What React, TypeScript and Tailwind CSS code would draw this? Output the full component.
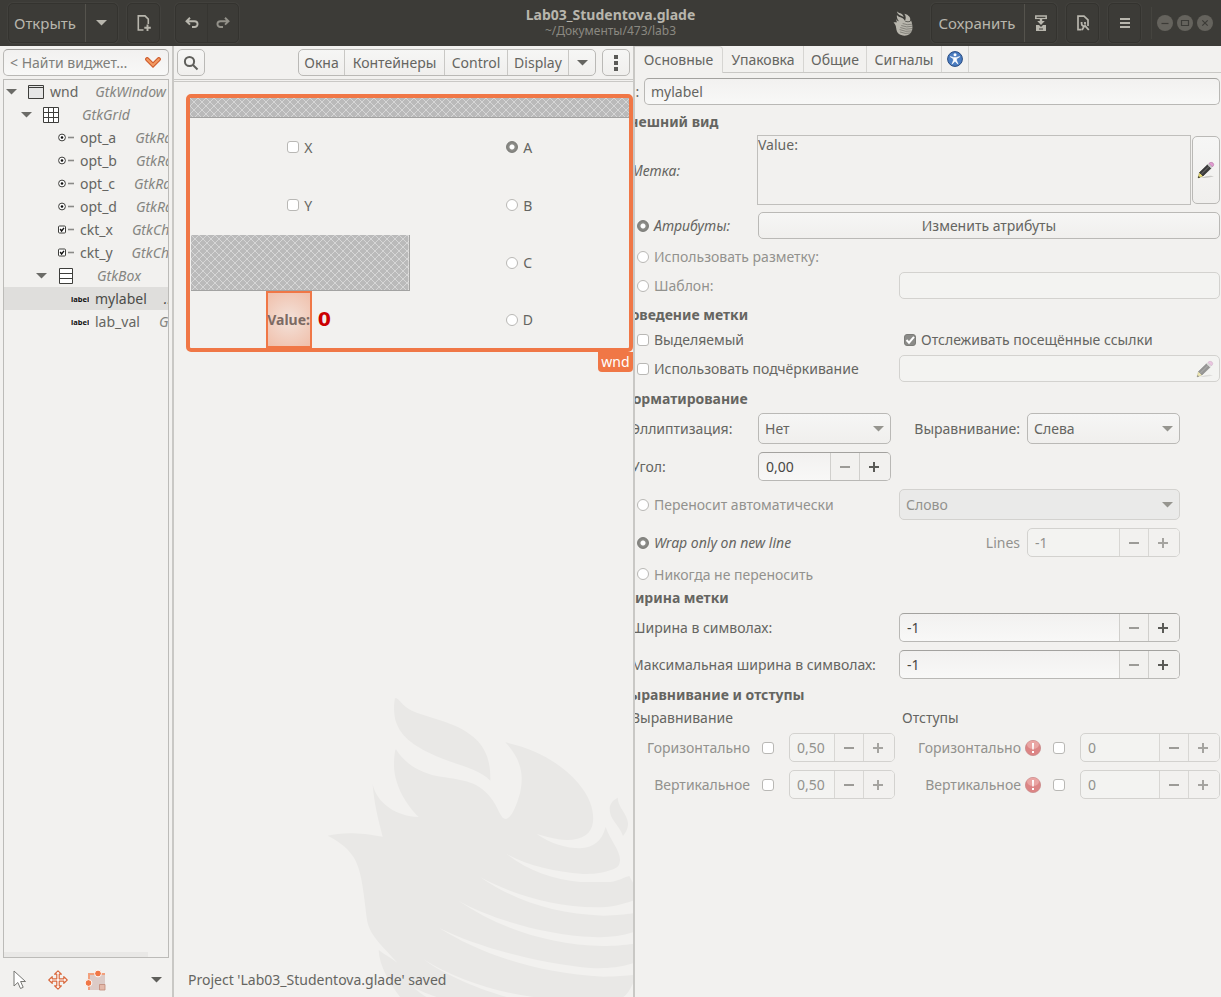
import { useId, type ReactNode } from "react";

const FIELD = "border border-[#b9b8b5] border-t-[#a3a29f] bg-linear-to-b from-[#f2f1f0] to-[#f8f8f7] rounded-[5px]";
const FIELD_OFF = "border border-[#d3d2cf] bg-[#f3f3f1] rounded-[5px]";
const BUTTON = "border border-[#bab9b6] bg-linear-to-b from-[#f6f6f5] to-[#f0efed] rounded-[5px]";

function Triangle({ className = "" }: { className?: string }) {
  return (
    <svg viewBox="0 0 11 6" className={`h-[6px] w-[11px] ${className}`} fill="currentColor" aria-hidden="true">
      <path d="M0 0H11L5.5 5.6Z" />
    </svg>
  );
}

/* ---------- header bar ---------- */

const HEAD_GROUP = "flex h-10 rounded-[5px] border border-[#34332f] bg-[#3c3b37] shadow-[0_0_0_1px_#42413d]";
const HEAD_BTN = "flex h-full w-[31px] items-center justify-center text-[#b8b6ad]";

function BirdIcon() {
  return (
    <svg viewBox="0 0 58 74" className="h-[25px] w-[20px]" aria-hidden="true">
      <g fill="#b8b6ad">
        <path d="M11 1C15 8 28 5 31 18C24 13 12 12 11 1Z" />
        <path d="M33 8C46 11 53 20 50 29C46 33 40 31 35 29C38 22 38 14 33 8Z" />
        <path d="M11 12C16 20 28 17 33 27L36 31C42 34 50 34 53 28C57 38 58 48 56 57C53 67 45 73 34 73C19 73 10 65 9 52C8 43 6 39 1 34C5 33 9 33 11 34L8 23C10 28 13 30 17 30C12 25 10 19 11 12Z" />
      </g>
      <g fill="none" stroke="#3c3b37" strokeWidth="1.3">
        <path d="M28 37Q42 43 56 39M24 43Q40 50 57 45M21 49Q38 57 57 52M19 55Q36 63 56 59M20 62Q35 69 52 65" />
      </g>
    </svg>
  );
}

function WindowDot({ label, children }: { label: string; children: ReactNode }) {
  return (
    <button aria-label={label} className="size-4 rounded-full bg-[#65635d] text-[#3c3b37]">
      <svg viewBox="0 0 16 16" className="size-4" fill="none" stroke="currentColor" strokeWidth="1.2">
        {children}
      </svg>
    </button>
  );
}

function HeaderBar() {
  return (
    <header className="grid h-[46px] shrink-0 grid-cols-[1fr_auto_1fr] items-center bg-[#3c3b37] pr-2 pl-2 text-[#b8b6ad]">
      <div className="flex items-center">
        <div className={HEAD_GROUP}>
          <button className="w-[77px] border-r border-[#55534d] pr-1 text-[15px]">Открыть</button>
          <button className={HEAD_BTN} aria-label="Недавние файлы"><Triangle /></button>
        </div>
        <div className={`${HEAD_GROUP} ml-[9px]`}>
          <button className={HEAD_BTN} aria-label="Новый проект">
            <svg viewBox="0 0 16 16" className="size-4" fill="none" stroke="currentColor" strokeWidth="1.6">
              <path d="M7.5 15H2.3V.9H9L12.3 4.2V9" />
              <path d="M11.5 9.5V16M8.3 12.7H14.8" strokeWidth="1.9" />
            </svg>
          </button>
        </div>
        <div className={`${HEAD_GROUP} ml-[15px]`}>
          <button className={HEAD_BTN} aria-label="Отменить">
            <svg viewBox="0 0 14 12" className="h-3 w-[14px]" fill="none" stroke="currentColor" strokeWidth="1.9">
              <path d="M5 .8L1.5 4.2L5 7.6M2 4.2H9.5C13.6 4.2 13.6 10 9.5 10H7" />
            </svg>
          </button>
          <button className={`${HEAD_BTN} border-l border-[#34332f] opacity-70`} aria-label="Повторить">
            <svg viewBox="0 0 14 12" className="h-3 w-[14px]" fill="none" stroke="currentColor" strokeWidth="1.9">
              <path d="M9 .8L12.5 4.2L9 7.6M12 4.2H4.5C.4 4.2 .4 10 4.5 10H7" />
            </svg>
          </button>
        </div>
      </div>
      <div className="text-center">
        <h1 className="text-[14px] leading-4 font-bold">Lab03_Studentova.glade</h1>
        <p className="text-[12px] leading-4 text-[#8b8981]">~/Документы/473/lab3</p>
      </div>
      <div className="flex items-center justify-end">
        <BirdIcon />
        <div className={`${HEAD_GROUP} ml-[18px]`}>
          <button className="w-[93px] border-r border-[#55534d] pr-[2px] text-[15px]">Сохранить</button>
          <button className={HEAD_BTN} aria-label="Сохранить как">
            <svg viewBox="0 0 14 16" className="h-4 w-[14px]" aria-hidden="true">
              <path d="M1.8 3.2V1H12.2V3.2" fill="none" stroke="currentColor" strokeWidth="1.5" />
              <path d="M1 3.5H13" stroke="currentColor" strokeWidth="1.2" />
              <path d="M5.8 4H8.2V6H10.8L7 10L3.2 6H5.8Z" fill="currentColor" />
              <path d="M2 10H5L7 12L9 10H12V16H2ZM5 13.5V14.5H9V13.5Z" fill="currentColor" fillRule="evenodd" />
            </svg>
          </button>
        </div>
        <div className={`${HEAD_GROUP} ml-[9px]`}>
          <button className={HEAD_BTN} aria-label="Просмотр">
            <svg viewBox="0 0 14 16" className="h-4 w-[14px]" fill="none" stroke="currentColor" strokeWidth="1.7">
              <path d="M5.5 14.6H2V1.2H8L12 4.8V11" />
              <path d="M5.6 7V8.6C5.6 11 7.8 11.6 9.2 10.8L12.8 15M9 7V9.4M6 15L8.6 10.6" strokeWidth="1.8" />
            </svg>
          </button>
        </div>
        <div className={`${HEAD_GROUP} ml-[9px]`}>
          <button className={HEAD_BTN} aria-label="Меню">
            <svg viewBox="0 0 10 10" className="size-[10px]" fill="currentColor"><path d="M0 0H10V2H0ZM0 4H10V6H0ZM0 8H10V10H0Z" /></svg>
          </button>
        </div>
        <div className="ml-[10px] flex h-8 items-center gap-1 border-l border-[#45443f] pl-[5px]">
          <WindowDot label="Свернуть"><path d="M4.5 8.5H11.5" /></WindowDot>
          <WindowDot label="Развернуть"><path d="M4.5 5.5H11.5V10.5H4.5Z" /></WindowDot>
          <WindowDot label="Закрыть"><path d="M5.3 5.3L10.7 10.7M10.7 5.3L5.3 10.7" /></WindowDot>
        </div>
      </div>
    </header>
  );
}

/* ---------- widget tree ---------- */

type Kind = "window" | "grid" | "radio" | "check" | "box" | "label";

function KindIcon({ kind }: { kind: Kind }) {
  if (kind === "label") {
    return (
      <svg viewBox="0 0 18 8" className="h-2 w-[18px] shrink-0" aria-hidden="true">
        <text x="0" y="7" fontSize="7.5" fontWeight="700" fill="#111">label</text>
      </svg>
    );
  }
  return (
    <svg viewBox="0 0 16 16" className="size-4 shrink-0" fill="none" stroke="#3e3e3b" aria-hidden="true">
      {kind === "window" && <><path d="M.5 1.5H15.5V14.5H.5Z" fill="#e6e6e6" /><path d="M.5 3.5H15.5" /></>}
      {kind === "grid" && <><path d="M.5 .5H15.5V15.5H.5Z" fill="#fff" /><path d="M5.5 .5V15.5M10.5 .5V15.5M.5 5.5H15.5M.5 10.5H15.5" /></>}
      {kind === "box" && <><path d="M1.5 .5H14.5V15.5H1.5Z" fill="#fff" /><path d="M1.5 5.5H14.5M1.5 10.5H14.5" /></>}
      {kind === "radio" && <><circle cx="4" cy="7.5" r="3.4" fill="#fff" /><circle cx="4" cy="7.5" r="1.3" fill="#111" stroke="none" /><path d="M10 7.5H16" stroke="#8a8a87" strokeWidth="1.6" /></>}
      {kind === "check" && <><rect x=".5" y="4" width="7" height="7" rx="1" fill="#fff" /><path d="M2.2 7L3.6 9L6 5.8" strokeWidth="1.4" stroke="#111" /><path d="M10 7.5H16" stroke="#8a8a87" strokeWidth="1.6" /></>}
    </svg>
  );
}

const TREE: { kind: Kind; name: string; type: string; pad: string; gap: string; open?: boolean; selected?: boolean }[] = [
  { kind: "window", name: "wnd", type: "GtkWindow", pad: "pl-[2px]", gap: "ml-[17px]", open: true },
  { kind: "grid", name: "", type: "GtkGrid", pad: "pl-[17px]", gap: "ml-[17px]", open: true },
  { kind: "radio", name: "opt_a", type: "GtkRadioButton", pad: "pl-[54px]", gap: "ml-[19px]" },
  { kind: "radio", name: "opt_b", type: "GtkRadioButton", pad: "pl-[54px]", gap: "ml-[19px]" },
  { kind: "radio", name: "opt_c", type: "GtkRadioButton", pad: "pl-[54px]", gap: "ml-[19px]" },
  { kind: "radio", name: "opt_d", type: "GtkRadioButton", pad: "pl-[54px]", gap: "ml-[19px]" },
  { kind: "check", name: "ckt_x", type: "GtkCheckButton", pad: "pl-[54px]", gap: "ml-[19px]" },
  { kind: "check", name: "ckt_y", type: "GtkCheckButton", pad: "pl-[54px]", gap: "ml-[19px]" },
  { kind: "box", name: "", type: "GtkBox", pad: "pl-[32px]", gap: "ml-[17px]", open: true },
  { kind: "label", name: "mylabel", type: "...", pad: "pl-[67px]", gap: "ml-[17px]", selected: true },
  { kind: "label", name: "lab_val", type: "GtkLabel", pad: "pl-[67px]", gap: "ml-[19px]" },
];

function TreePanel() {
  return (
    <aside className="flex w-[172px] shrink-0 flex-col pt-[3px] pr-[3px] pl-[3px]">
      <div className={`flex h-[27px] items-center ${FIELD} pr-[7px] pl-[6px]`}>
        <input aria-label="Найти виджет" placeholder="< Найти виджет…" className="min-w-0 flex-1 bg-transparent text-[14px] outline-none placeholder:text-[#7f7f7b]" />
        <svg viewBox="0 0 16 11" className="h-[11px] w-4 shrink-0" fill="none" strokeLinecap="round" aria-hidden="true">
          <path d="M2.2 2.2L8 8L13.8 2.2" stroke="#cf5a2a" strokeWidth="4.2" />
          <path d="M2.2 2.2L8 8L13.8 2.2" stroke="#f29a62" strokeWidth="2" />
        </svg>
      </div>
      <div className="mt-[3px] flex min-h-0 flex-1 flex-col justify-between overflow-hidden border border-[#bcbbb8]">
        <ul role="tree" aria-label="Виджеты">
          {TREE.map((node, i) => (
            <li key={i} role="treeitem" aria-selected={!!node.selected} className={`flex h-[23px] items-center text-[14px] whitespace-nowrap ${node.pad} ${node.selected ? "bg-[#dfdedc] text-[#4c4c49]" : ""}`}>
              {node.open && <Triangle className="mr-[11px] shrink-0 text-[#6b6b67]" />}
              <KindIcon kind={node.kind} />
              <span className="ml-[6px]">{node.name}</span>
              <em className={`${node.gap} ${node.selected ? "" : "text-[#858581]"}`}>{node.type}</em>
            </li>
          ))}
        </ul>
        <div className="h-[5px] w-[144px] bg-[#e9e8e6]" />
      </div>
      <div className="flex h-[39px] items-center pt-1 pr-[7px] pl-[9px]">
        <button aria-label="Выделение">
          <svg viewBox="0 0 16 20" className="h-5 w-4" fill="#fff" stroke="#777773" strokeLinejoin="round"><path d="M2 1V16L5.8 12.5L8.5 18.5L11.2 17.3L8.6 11.5H13.5Z" /></svg>
        </button>
        <button aria-label="Перемещение" className="ml-[20px]">
          <svg viewBox="0 0 20 20" className="size-5" fill="#fff" stroke="#d9683c" strokeWidth="1.2" strokeLinejoin="round">
            <path d="M10 .8L13.4 4.2H11.2V8.8H15.8V6.6L19.2 10L15.8 13.4V11.2H11.2V15.8H13.4L10 19.2L6.6 15.8H8.8V11.2H4.2V13.4L.8 10L4.2 6.6V8.8H8.8V4.2H6.6Z" />
          </svg>
        </button>
        <button aria-label="Поля" className="ml-[16px]">
          <svg viewBox="0 0 22 22" className="size-[22px]" aria-hidden="true">
            <path d="M4 4H21V21H4Z" fill="#dccbc7" />
            <path d="M4 4H21V6H6V21H4Z" fill="#f2a07c" />
            <path d="M15.5 15.5H21V21H15.5Z" fill="#e4b9aa" stroke="#c08a78" strokeWidth=".8" />
            <circle cx="14" cy="4.5" r="3.4" fill="#f07746" stroke="#fff" strokeWidth="1" />
            <circle cx="4.5" cy="14" r="3.4" fill="#f07746" stroke="#fff" strokeWidth="1" />
          </svg>
        </button>
        <button aria-label="Ещё инструменты" className="ml-auto text-[#5f5f5b]"><Triangle className="w-[10px]" /></button>
      </div>
    </aside>
  );
}

/* ---------- form primitives ---------- */

function Toggle({ type, label, checked, dim, italic, name, hideLabel }: { type: "radio" | "checkbox"; label: string; checked?: boolean; dim?: boolean; italic?: boolean; name?: string; hideLabel?: boolean }) {
  const round = type === "radio" ? "rounded-full checked:bg-[radial-gradient(circle,#fff_2px,#8d8d89_3px,#7a7a76_7px)]" : "rounded-[3px] checked:bg-[#8b8b88]";
  return (
    <label className={`inline-flex items-center gap-[5px] whitespace-nowrap ${dim ? "text-[#92928e]" : ""} ${italic ? "italic" : ""}`}>
      <span className="relative flex">
        <input type={type} name={name} defaultChecked={checked} aria-label={label} className={`size-3 appearance-none border border-[#b9b8b5] bg-white checked:border-[#7c7c78] ${round}`} />
        {type === "checkbox" && checked && (
          <svg viewBox="0 0 12 12" className="pointer-events-none absolute inset-0 size-3" fill="none" stroke="#fff" strokeWidth="2"><path d="M2.5 6L5 8.7L10 2.8" /></svg>
        )}
      </span>
      {!hideLabel && label}
    </label>
  );
}

function Spin({ value, label, off, className = "" }: { value: string; label: string; off?: boolean; className?: string }) {
  const line = off ? "border-[#d8d7d4]" : "border-[#d0cfcc]";
  return (
    <div className={`flex h-[29px] overflow-hidden ${off ? FIELD_OFF : FIELD} ${className}`}>
      <input aria-label={label} defaultValue={value} className={`min-w-0 flex-1 bg-transparent pl-[7px] outline-none ${off ? "text-[#92928e]" : "text-[#474744]"}`} />
      <button aria-label={`${label}: меньше`} className={`flex w-[29px] items-center justify-center border-l bg-[#f2f1ef] ${line}`}>
        <svg viewBox="0 0 10 10" className="size-[10px]" fill="#9c9b97"><path d="M0 4H10V6H0Z" /></svg>
      </button>
      <button aria-label={`${label}: больше`} className={`flex w-[31px] items-center justify-center border-l bg-[#f2f1ef] pr-[2px] ${line}`}>
        <svg viewBox="0 0 10 10" className={`size-[10px] ${off ? "fill-[#a5a4a0]" : "fill-[#5b5b57]"}`}><path d="M4 0H6V4H10V6H6V10H4V6H0V4H4Z" /></svg>
      </button>
    </div>
  );
}

function Combo({ value, label, off, className = "" }: { value: string; label: string; off?: boolean; className?: string }) {
  return (
    <div className={`relative h-[31px] ${className}`}>
      <select aria-label={label} className={`size-full appearance-none pl-[6px] ${off ? "rounded-[5px] border border-[#d3d2cf] bg-[#eaeae9] text-[#92928e]" : BUTTON}`}>
        <option>{value}</option>
      </select>
      <Triangle className="pointer-events-none absolute top-[13px] right-[7px] text-[#96958f]" />
    </div>
  );
}

/* ---------- design canvas ---------- */

function Hatch({ className = "" }: { className?: string }) {
  const id = useId();
  return (
    <svg className={`border-b border-[#a3a3a2] ${className}`} aria-hidden="true">
      <defs>
        <pattern id={id} width="8" height="8" patternUnits="userSpaceOnUse">
          <rect width="8" height="8" fill="#bababa" />
          <path d="M0 0L8 8M8 0L0 8" stroke="#d6d6d6" strokeWidth="1" />
        </pattern>
      </defs>
      <rect width="100%" height="100%" fill={`url(#${id})`} />
    </svg>
  );
}

function BirdWatermark() {
  return (
    <svg viewBox="0 0 939 921" className="absolute right-0 bottom-0 h-[307px] w-[313px]" fill="#e9e8e6" aria-hidden="true">
      <path d="M225 25C240 22 240 50 290 68C350 90 420 100 470 150C505 185 512 230 511 272C470 230 400 225 330 190C270 160 240 135 226 90C220 60 222 40 225 25Z" />
      <path d="M228 178C250 215 290 245 350 258C420 270 470 270 510 320C535 350 540 385 557 387C575 385 590 345 600 310C612 255 605 210 556 157C640 175 720 215 775 280C810 322 822 360 819 395C815 430 790 450 740 450C705 448 680 440 650 432C690 460 740 475 780 475C820 472 845 455 857 411C870 450 900 480 900 510C898 530 893 530 880 538C840 552 820 552 790 552C700 545 620 525 560 492C620 540 700 570 780 576L870 576C900 572 915 560 928 558L939 578V632C900 645 870 652 830 652C700 650 580 615 480 561C580 630 700 672 850 677C890 677 915 673 939 670V727C900 740 860 743 820 741C680 735 520 690 415 632C530 710 680 765 850 768C880 768 915 765 939 762V820C890 835 850 836 810 834C650 820 470 770 358 714C470 785 640 850 850 860C890 860 920 857 939 855V880Q925 912 910 921H640C520 905 400 865 310 808C360 845 450 890 560 921H350C320 910 290 900 273 884C290 900 300 910 320 921H240C210 880 178 830 176 780C195 795 215 805 232 818C190 770 150 740 141 690C130 600 125 540 100 500C80 470 50 450 23 437C60 428 110 425 188 440C175 390 162 340 158 283C170 340 230 380 296 381C260 345 225 290 222 230C222 210 224 178 228 178Z" />
      <path d="M893 323C895 355 922 370 924 400C924 420 915 430 909 438C895 400 868 390 869 355C870 340 880 330 893 323Z" />
    </svg>
  );
}

function CanvasPanel() {
  return (
    <main className="flex w-[463px] shrink-0 flex-col overflow-hidden border-x-2 border-[#c9c8c5]">
      <div className="flex h-[33px] shrink-0 items-center pr-[3px] pl-[3px] text-[14px]">
        <button className={`flex h-[27px] w-[28px] items-center justify-center ${BUTTON}`} aria-label="Поиск">
          <svg viewBox="0 0 16 16" className="size-4" fill="none" stroke="#5f5f5b" strokeWidth="2"><circle cx="6.5" cy="6.5" r="4.6" /><path d="M10 10L14.5 14.5" /></svg>
        </button>
        <div className={`ml-auto flex h-[27px] divide-x divide-[#c9c8c5] ${BUTTON}`}>
          <button className="w-[46px]">Окна</button>
          <button className="w-[100px]">Контейнеры</button>
          <button className="w-[63px]">Control</button>
          <button className="w-[61px]">Display</button>
          <button className="flex w-[26px] items-center justify-center" aria-label="Ещё"><Triangle className="w-[10px]" /></button>
        </div>
        <button className={`ml-[6px] flex h-[27px] w-[28px] items-center justify-center ${BUTTON}`} aria-label="Меню вида">
          <svg viewBox="0 0 4 16" className="h-4 w-1" fill="#5a5a57"><path d="M0 0H4V4H0ZM0 6H4V10H0ZM0 12H4V16H0Z" /></svg>
        </button>
      </div>
      <div className="h-[3px] shrink-0 border-y border-[#c9c8c5]" />
      <div className="relative flex min-h-0 flex-1 flex-col pt-[12px] pl-[12px]">
        <BirdWatermark />
        <div className="relative flex flex-col items-end">
          <div className="w-full rounded-[5px] border-4 border-[#f07746] bg-[#f2f1ef]">
            <Hatch className="block h-[20px] w-full" />
            <div className="grid grid-cols-2 grid-rows-[58px_58px_57px_57px] text-[14px]">
              <div className="flex items-center justify-center"><Toggle type="checkbox" label="X" /></div>
              <div className="flex items-center justify-center"><Toggle type="radio" name="opt" label="A" checked /></div>
              <div className="flex items-center justify-center"><Toggle type="checkbox" label="Y" /></div>
              <div className="flex items-center justify-center"><Toggle type="radio" name="opt" label="B" /></div>
              <div className="pt-px pl-px"><Hatch className="block h-full w-full border-r" /></div>
              <div className="flex items-center justify-center"><Toggle type="radio" name="opt" label="C" /></div>
              <div className="flex items-center justify-center gap-[6px] pr-[3px]">
                <span className="flex h-full w-[46px] items-center justify-center border-2 border-[#f07746] bg-[radial-gradient(circle,#f3e2da,#f0bfaa)] text-[14px] font-bold text-[#7d6a63]">Value:</span>
                <span className="font-['DejaVu_Sans'] text-[19px] font-bold text-[#cc0000]">0</span>
              </div>
              <div className="flex items-center justify-center"><Toggle type="radio" name="opt" label="D" /></div>
            </div>
          </div>
          <span className="flex h-5 w-[35px] items-center justify-center rounded-b-[4px] bg-[#f07746] pb-px text-[14px] leading-5 text-white">wnd</span>
        </div>
        <p className="relative mt-auto flex h-9 items-center pl-[2px] text-[14px]">Project 'Lab03_Studentova.glade' saved</p>
      </div>
    </main>
  );
}

/* ---------- property editor ---------- */

function Pencil({ faded }: { faded?: boolean }) {
  return (
    <svg viewBox="0 0 18 18" className={`size-[18px] shrink-0 ${faded ? "opacity-50" : ""}`} aria-hidden="true">
      <path d="M4 17Q12 13.5 17 15.2Q12 17 4 17Z" fill="#c9c8c5" />
      <path d="M1 17L2.5 11.5L6 15Z" fill="#ecdf72" stroke="#8c8440" strokeWidth=".5" />
      <path d="M2.5 11.5L10.5 3.8L14 7.3L6 15Z" fill="#3b3b3b" stroke="#222" strokeWidth=".6" />
      <path d="M4.2 13.2L12 5.5" stroke="#777" strokeWidth=".9" />
      <path d="M10.5 3.8L12 2.3L15.5 5.8L14 7.3Z" fill="#c6c6c6" />
      <path d="M12 2.3Q14 .4 16 1.9Q17.8 3.8 15.5 5.8Z" fill="#e29bd1" stroke="#a8669b" strokeWidth=".5" />
      <path d="M1 17L1.6 14.9L3.1 16.4Z" fill="#222" />
    </svg>
  );
}

function Heading({ h, children }: { h: string; children: ReactNode }) {
  return <h2 className={`-ml-[11px] flex items-center font-bold ${h}`}>{children}</h2>;
}

function Warning() {
  return (
    <svg viewBox="0 0 16 16" className="ml-1 size-4 shrink-0" role="img" aria-label="Устаревшее свойство">
      <circle cx="8" cy="8" r="7.6" fill="#dc8585" stroke="#c98a8a" strokeWidth=".8" />
      <ellipse cx="8" cy="4.8" rx="6" ry="4" fill="#e9a5a3" />
      <path d="M7 3H9L8.7 9.5H7.3ZM7 11H9V13H7Z" fill="#fff" />
    </svg>
  );
}

function AlignRow({ label }: { label: string }) {
  return (
    <div className="flex h-[37px] items-center pr-px">
      <span className="w-[119px] text-right text-[#92928e]">{label}</span>
      <span className="ml-[12px] flex"><Toggle type="checkbox" label={`${label}: выравнивание`} hideLabel /></span>
      <Spin value="0,50" label={`${label}: выравнивание`} off className="ml-[15px] w-[106px]" />
      <span className="w-[126px] text-right text-[#92928e]">{label}</span>
      <Warning />
      <span className="ml-[12px] flex"><Toggle type="checkbox" label={`${label}: отступ`} hideLabel /></span>
      <Spin value="0" label={`${label}: отступ`} off className="ml-[15px] min-w-0 flex-1" />
    </div>
  );
}

const TABS = [
  { name: "Основные", w: "w-[88px]" },
  { name: "Упаковка", w: "w-[81px]" },
  { name: "Общие", w: "w-[63px]" },
  { name: "Сигналы", w: "w-[75px]" },
];

function PropertyPanel() {
  return (
    <section className="min-w-0 flex-1 overflow-hidden text-[14px]" aria-label="Свойства">
      <div className="flex h-[27px] border-b border-[#c9c8c5]" role="tablist">
        {TABS.map((t, i) => (
          <button key={t.name} role="tab" aria-selected={i === 0} className={`${t.w} border-r border-[#d6d5d2] ${i === 0 ? "-mb-px rounded-tr-[4px] border-t border-[#c9c8c5] bg-[#f2f1ef] pb-[2px]" : ""}`}>{t.name}</button>
        ))}
        <button role="tab" aria-selected="false" aria-label="Доступность" className="flex w-[27px] items-center justify-center border-r border-[#d6d5d2]">
          <svg viewBox="0 0 16 16" className="size-4">
            <circle cx="8" cy="8" r="7.4" fill="#4a7cc0" stroke="#26497f" />
            <circle cx="8" cy="3.8" r="1.5" fill="#fff" />
            <path d="M3.2 5.6L6.6 6.4H9.4L12.8 5.6L9.6 7.8V9.5L11 13.2L8 10.2L5 13.2L6.4 9.5V7.8Z" fill="#fff" stroke="#fff" strokeWidth=".6" />
          </svg>
        </button>
      </div>
      <div className="-ml-1">
        <div className="flex h-[37px] items-center pr-px">
          <label htmlFor="widget-id" className="-ml-[14px] w-[27px] text-left">ID&nbsp;:</label>
          <input id="widget-id" defaultValue="mylabel" className={`h-[27px] min-w-0 flex-1 pl-[6px] outline-none ${FIELD}`} />
        </div>
        <Heading h="h-[22px]">Внешний вид</Heading>
        <div className="flex h-[76px] items-center pr-px">
          <label htmlFor="label-text" className="w-[126px] italic">Метка:</label>
          <textarea id="label-text" defaultValue="Value:" className="block h-[70px] min-w-0 flex-1 resize-none border border-[#c0bfbc] bg-transparent leading-[18px] outline-none" />
          <button aria-label="Изменить метку" className={`ml-px flex h-[68px] w-[28px] items-center justify-center ${BUTTON}`}><Pencil /></button>
        </div>
        <div className="flex h-[35px] items-center pr-px">
          <div className="flex w-[127px] pl-[6px]"><Toggle type="radio" name="attr" label="Атрибуты:" checked italic /></div>
          <button className={`h-[27px] flex-1 ${BUTTON}`}>Изменить атрибуты</button>
        </div>
        <div className="flex h-[27px] items-center pl-[6px]"><Toggle type="radio" name="attr" label="Использовать разметку:" dim /></div>
        <div className="flex h-[31px] items-center pr-px">
          <div className="flex w-[268px] pl-[6px]"><Toggle type="radio" name="attr" label="Шаблон:" dim /></div>
          <input aria-label="Шаблон" className={`h-[27px] min-w-0 flex-1 ${FIELD_OFF}`} />
        </div>
        <Heading h="h-[27px]">Поведение метки</Heading>
        <div className="flex h-[23px] items-center">
          <div className="flex w-[273px] pl-[6px]"><Toggle type="checkbox" label="Выделяемый" /></div>
          <Toggle type="checkbox" label="Отслеживать посещённые ссылки" checked />
        </div>
        <div className="flex h-[35px] items-center pr-px">
          <div className="flex w-[268px] pl-[6px]"><Toggle type="checkbox" label="Использовать подчёркивание" /></div>
          <div className={`flex h-[27px] flex-1 items-center pr-[5px] ${FIELD_OFF}`}>
            <input aria-label="Подчёркивание" className="min-w-0 flex-1 bg-transparent outline-none" />
            <Pencil faded />
          </div>
        </div>
        <Heading h="h-[24px]">Форматирование</Heading>
        <div className="flex h-[37px] items-center pr-[41px]">
          <span className="w-[127px]">Эллиптизация:</span>
          <Combo value="Нет" label="Эллиптизация" className="w-[133px]" />
          <span className="w-[129px] text-right">Выравнивание:</span>
          <Combo value="Слева" label="Выравнивание" className="ml-[7px] flex-1" />
        </div>
        <div className="flex h-[39px] items-center">
          <span className="w-[127px]">Угол:</span>
          <Spin value="0,00" label="Угол" className="w-[133px]" />
        </div>
        <div className="flex h-[37px] items-center pr-[41px]">
          <div className="flex w-[268px] pl-[6px]"><Toggle type="radio" name="wrap" label="Переносит автоматически" dim /></div>
          <Combo value="Слово" label="Перенос" off className="flex-1" />
        </div>
        <div className="flex h-[39px] items-center pr-[41px]">
          <div className="flex w-[268px] pl-[6px]"><Toggle type="radio" name="wrap" label="Wrap only on new line" checked italic /></div>
          <span className="w-[121px] text-right text-[#92928e]">Lines</span>
          <Spin value="-1" label="Lines" off className="ml-[7px] min-w-0 flex-1" />
        </div>
        <div className="flex h-[24px] items-center pl-[6px]"><Toggle type="radio" name="wrap" label="Никогда не переносить" dim /></div>
        <Heading h="h-[23px]">Ширина метки</Heading>
        <div className="flex h-[37px] items-center pr-[41px]">
          <span className="w-[268px]">Ширина в символах:</span>
          <Spin value="-1" label="Ширина в символах" className="min-w-0 flex-1" />
        </div>
        <div className="flex h-[37px] items-center pr-[41px]">
          <span className="w-[268px] whitespace-nowrap">Максимальная ширина в символах:</span>
          <Spin value="-1" label="Максимальная ширина в символах" className="min-w-0 flex-1" />
        </div>
        <Heading h="h-[23px]">Выравнивание и отступы</Heading>
        <div className="flex h-[23px] items-center">
          <span className="w-[271px]">Выравнивание</span>
          <span>Отступы</span>
        </div>
        <AlignRow label="Горизонтально" />
        <AlignRow label="Вертикальное" />
      </div>
    </section>
  );
}

export default function App() {
  return (
    <div className="flex h-screen flex-col overflow-hidden bg-[#f2f1ef] font-['Noto_Sans',sans-serif] text-[#656561]">
      <HeaderBar />
      <div className="flex min-h-0 flex-1">
        <TreePanel />
        <CanvasPanel />
        <PropertyPanel />
      </div>
    </div>
  );
}
